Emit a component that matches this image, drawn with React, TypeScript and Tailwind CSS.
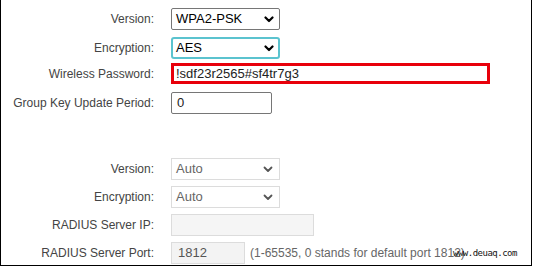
import type { ReactNode } from "react";

const FONT = { fontFamily: '"Liberation Sans", Arial, sans-serif' };

function Chevron({ muted }: { muted?: boolean }) {
  return (
    <svg
      width="10"
      height="7"
      viewBox="0 0 10 7"
      className="shrink-0"
      fill="none"
      stroke={muted ? "#555" : "#000"}
      strokeWidth={muted ? 1.8 : 2.2}
      strokeLinecap="round"
      strokeLinejoin="round"
    >
      <path d="M1.5 1.5 L5 5 L8.5 1.5" />
    </svg>
  );
}

function Row({
  label,
  className,
  children,
}: {
  label: string;
  className: string;
  children: ReactNode;
}) {
  return (
    <div className={`flex items-center ${className}`}>
      <div className="w-[153px] shrink-0 text-right text-[12px] text-[#444]">
        {label}
      </div>
      <div className="ml-[17px] flex items-center">{children}</div>
    </div>
  );
}

export default function App() {
  return (
    <div className="h-[267px] w-[533px] bg-white" style={FONT}>
      <div className="relative h-[266px] w-[532px] overflow-hidden border-x border-b border-black">
        <Row label="Version:" className="mt-[8px] h-[22px]">
          <div className="flex h-[22px] w-[109px] items-center justify-between rounded-[2px] border border-[#767676] pl-[4px] pr-[5px] text-[13px] text-black">
            <span>WPA2-PSK</span>
            <Chevron />
          </div>
        </Row>
        <Row label="Encryption:" className="mt-[7px] h-[22px]">
          <div className="flex h-[22px] w-[109px] items-center justify-between rounded-[3px] border-2 border-[#5bc3cf] pl-[3px] pr-[4px] text-[13px] text-black">
            <span>AES</span>
            <Chevron />
          </div>
        </Row>
        <Row label="Wireless Password:" className="mt-[4px] h-[21px]">
          <div className="flex h-[21px] w-[319px] items-center border-[3px] border-[#e8000b] pl-[2px] text-[13px] text-[#222]">
            !sdf23r2565#sf4tr7g3
          </div>
        </Row>
        <Row label="Group Key Update Period:" className="mt-[8px] h-[22px]">
          <div className="flex h-[22px] w-[101px] items-center rounded-[2px] border border-[#767676] pl-[5px] text-[13px] text-[#222]">
            0
          </div>
        </Row>

        <Row label="Version:" className="mt-[44px] h-[22px]">
          <div className="flex h-[22px] w-[109px] items-center justify-between border border-[#dcdcdc] pl-[4px] pr-[6px] text-[13px] text-[#666]">
            <span>Auto</span>
            <Chevron muted />
          </div>
        </Row>
        <Row label="Encryption:" className="mt-[6px] h-[22px]">
          <div className="flex h-[22px] w-[109px] items-center justify-between border border-[#dcdcdc] pl-[4px] pr-[6px] text-[13px] text-[#666]">
            <span>Auto</span>
            <Chevron muted />
          </div>
        </Row>
        <Row label="RADIUS Server IP:" className="mt-[6px] h-[22px]">
          <div className="h-[22px] w-[143px] border border-[#dcdcdc] bg-[#f5f5f5]" />
        </Row>
        <Row label="RADIUS Server Port:" className="mt-[6px] h-[22px]">
          <div className="flex h-[22px] w-[74px] items-center border border-[#dcdcdc] bg-[#f3f3f3] pl-[6px] text-[13px] text-[#555]">
            1812
          </div>
          <span className="ml-[5px] text-[12px] text-[#666]">
            (1-65535, 0 stands for default port 1812)
          </span>
        </Row>

        <span
          className="absolute left-[452px] top-[249px] text-[9px] leading-none text-[#111]"
          style={{ fontFamily: '"DejaVu Sans Mono", monospace', letterSpacing: "-0.5px" }}
        >
          www.deuaq.com
        </span>
      </div>
    </div>
  );
}
